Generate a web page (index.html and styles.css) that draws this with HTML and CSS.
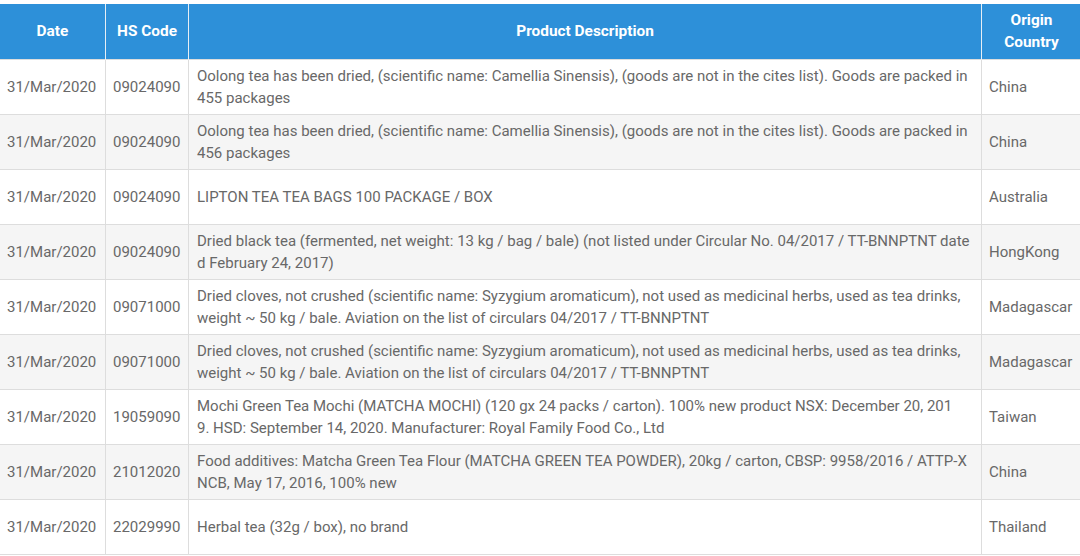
FILE: index.html
```html
<!DOCTYPE html>
<html lang="en">
<head>
<meta charset="utf-8">
<title>Import records</title>
<link rel="stylesheet" href="styles.css">
</head>
<body>
<div class="wrap">
<table class="records">
  <colgroup>
    <col class="c-date">
    <col class="c-hs">
    <col class="c-desc">
    <col class="c-origin">
  </colgroup>
  <thead>
    <tr><th>Date</th><th>HS Code</th><th>Product Description</th><th>Origin Country</th></tr>
  </thead>
  <tbody>
    <tr><td>31/Mar/2020</td><td>09024090</td><td class="desc">Oolong tea has been dried, (scientific name: Camellia Sinensis), (goods are not in the cites list). Goods are packed in 455 packages</td><td>China</td></tr>
    <tr><td>31/Mar/2020</td><td>09024090</td><td class="desc">Oolong tea has been dried, (scientific name: Camellia Sinensis), (goods are not in the cites list). Goods are packed in 456 packages</td><td>China</td></tr>
    <tr><td>31/Mar/2020</td><td>09024090</td><td class="desc">LIPTON TEA TEA BAGS 100 PACKAGE / BOX</td><td>Australia</td></tr>
    <tr><td>31/Mar/2020</td><td>09024090</td><td class="desc">Dried black tea (fermented, net weight: 13 kg / bag / bale) (not listed under Circular No. 04/2017 / TT-BNNPTNT dated February 24, 2017)</td><td>HongKong</td></tr>
    <tr><td>31/Mar/2020</td><td>09071000</td><td class="desc">Dried cloves, not crushed (scientific name: Syzygium aromaticum), not used as medicinal herbs, used as tea drinks, weight ~ 50 kg / bale. Aviation on the list of circulars 04/2017 / TT-BNNPTNT</td><td>Madagascar</td></tr>
    <tr><td>31/Mar/2020</td><td>09071000</td><td class="desc">Dried cloves, not crushed (scientific name: Syzygium aromaticum), not used as medicinal herbs, used as tea drinks, weight ~ 50 kg / bale. Aviation on the list of circulars 04/2017 / TT-BNNPTNT</td><td>Madagascar</td></tr>
    <tr><td>31/Mar/2020</td><td>19059090</td><td class="desc">Mochi Green Tea Mochi (MATCHA MOCHI) (120 gx 24 packs / carton). 100% new product NSX: December 20, 201<br>9. HSD: September 14, 2020. Manufacturer: Royal Family Food Co., Ltd</td><td>Taiwan</td></tr>
    <tr><td>31/Mar/2020</td><td>21012020</td><td class="desc">Food additives: Matcha Green Tea Flour (MATCHA GREEN TEA POWDER), 20kg / carton, CBSP: 9958/2016 / ATTP-XNCB, May 17, 2016, 100% new</td><td>China</td></tr>
    <tr><td>31/Mar/2020</td><td>22029990</td><td class="desc">Herbal tea (32g / box), no brand</td><td>Thailand</td></tr>
  </tbody>
</table>
</div>
</body>
</html>
```

FILE: styles.css
```css
html, body {
  margin: 0;
  padding: 0;
  background: #ffffff;
}
.wrap {
  padding-top: 4px;
  overflow: hidden;
  width: 1080px;
}
.records {
  border-collapse: collapse;
  table-layout: fixed;
  width: 1082px;
  margin-left: -1px;
  font-family: Roboto, "Liberation Sans", Arial, sans-serif;
  font-size: 15px;
  color: #686868;
}
.c-date { width: 106px; }
.c-hs { width: 83px; }
.c-desc { width: 793px; }
.c-origin { width: 100px; }
.records th {
  background: #2d90d9;
  color: #ffffff;
  font-weight: 700;
  font-size: 15.4px;
  height: 55px;
  padding: 0 6px;
  line-height: 22px;
  text-align: center;
  border-left: 1px solid #e6eef5;
  border-right: 1px solid #e6eef5;
  box-sizing: border-box;
}
.records td {
  height: 55px;
  padding: 0 7px;
  line-height: 22px;
  vertical-align: middle;
  border: 1px solid #dddddd;
  box-sizing: border-box;
  white-space: nowrap;
}
.records td.desc {
  padding: 0 7px 0 8px;
  white-space: normal;
  word-break: break-all;
}
.records tbody tr:nth-child(even) td {
  background: #f5f5f5;
}
```
